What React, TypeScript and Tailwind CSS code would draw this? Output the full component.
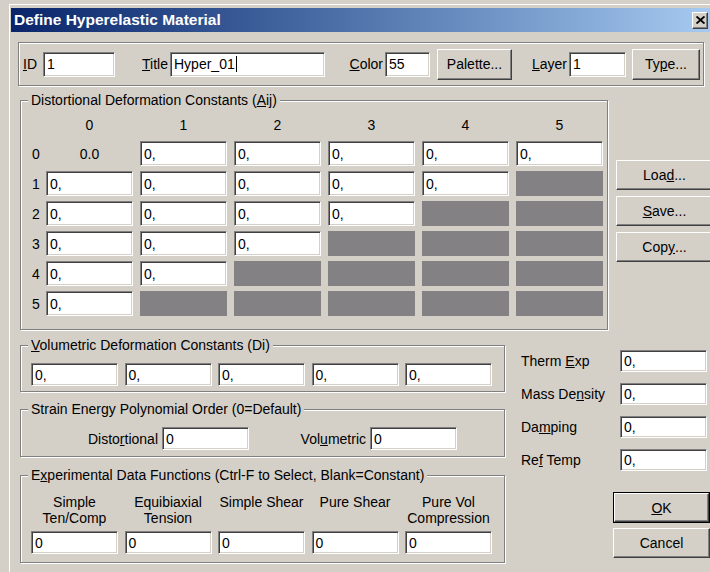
import React from "react";

// classic 3D edges
const sunken =
  "border border-t-[#808080] border-l-[#808080] border-b-white border-r-white shadow-[inset_1px_1px_0_#404040,inset_-1px_-1px_0_#d4d0c8]";
const raised =
  "border border-t-white border-l-white border-b-[#404040] border-r-[#404040] shadow-[inset_-1px_-1px_0_#808080]";
const etched = "border border-[#808080] shadow-[1px_1px_0_#fff,inset_1px_1px_0_#fff]";

function Field({
  value,
  className = "w-[87px] h-[25px]",
  caret = false,
}: {
  value: string;
  className?: string;
  caret?: boolean;
}) {
  return (
    <div
      className={`${sunken} ${className} shrink-0 bg-white flex items-center pl-[3px] overflow-hidden whitespace-nowrap`}
    >
      {value}
      {caret && <span className="ml-px inline-block w-px h-[16px] bg-black" />}
    </div>
  );
}

function Button({ children, className = "" }: { children: React.ReactNode; className?: string }) {
  return (
    <button className={`${raised} bg-[#d4d0c8] shrink-0 flex items-center justify-center ${className}`}>
      {children}
    </button>
  );
}

function Group({
  title,
  className = "",
  children,
}: {
  title: React.ReactNode;
  className?: string;
  children: React.ReactNode;
}) {
  return (
    <fieldset className={`${etched} ${className}`}>
      <legend className="ml-[7px] px-[3px] bg-[#d4d0c8] leading-[17px]">{title}</legend>
      {children}
    </fieldset>
  );
}

const cols = [0, 1, 2, 3, 4, 5];

function Cell({ r, c }: { r: number; c: number }) {
  if (r === 0 && c === 0) return <div className="w-[87px] h-[25px] shrink-0 flex items-center justify-center">0.0</div>;
  if (c >= 1 && r + c > 5) return <div className="w-[87px] h-[25px] shrink-0 bg-[#838184]" />;
  return <Field value="0," />;
}

export default function App() {
  return (
    <div className="w-[710px] h-[572px] overflow-hidden bg-[#d4d0c8] pl-[9px] pt-[4px] text-[14px] leading-[16px] text-black font-['Liberation_Sans',Arial,sans-serif]">
      <div className="border-l border-t border-white pl-px pt-[3px] h-full">
        {/* title bar */}
        <div className="h-[24px] w-[699px] flex items-center bg-linear-to-r from-[#0a246a] to-[#a6caf0] pl-[3px] pr-[2px]">
          <span className="font-bold text-white text-[15.5px]">Define Hyperelastic Material</span>
          <button className={`${raised} ml-auto w-[16px] h-[17px] bg-[#d4d0c8] flex items-center justify-center`}>
            <svg width="9" height="8" viewBox="0 0 9 8">
              <path d="M0.5 0.5 L8.5 7.5 M8.5 0.5 L0.5 7.5" stroke="#000" strokeWidth="1.9" />
            </svg>
          </button>
        </div>

        {/* id / title / color / layer */}
        <div className={`${etched} ml-[7px] mt-[10px] w-[686px] h-[44px] flex items-center`}>
          <span className="w-[24px] pl-[4px] shrink-0">
            <u>I</u>D
          </span>
          <Field value="1" className="w-[72px] h-[25px]" />
          <span className="w-[55px] text-right pr-[2px] shrink-0">
            <u>T</u>itle
          </span>
          <Field value="Hyper_01" caret className="w-[155px] h-[25px]" />
          <span className="w-[60px] text-right pr-[2px] shrink-0">
            <u>C</u>olor
          </span>
          <Field value="55" className="w-[45px] h-[25px]" />
          <Button className="ml-[7px] w-[75px] h-[31px]">Palette...</Button>
          <span className="w-[57px] text-right pr-[2px] shrink-0">
            <u>L</u>ayer
          </span>
          <Field value="1" className="w-[57px] h-[25px]" />
          <Button className="ml-[6px] w-[68px] h-[31px]">
            Ty<u>p</u>e...
          </Button>
        </div>

        {/* Aij matrix + file buttons */}
        <div className="flex mt-[6px]">
          <Group
            className="ml-[9px] w-[588px] shrink-0"
            title={
              <>
                Distortional Deformation Constants (<u>A</u>ij)
              </>
            }
          >
            <div className="pt-[8px] pb-[13px] pl-[5px]">
              <div className="flex h-[16px] items-center mb-[8px]">
                <span className="w-[20px] shrink-0" />
                <div className="flex gap-[7px]">
                  {cols.map((c) => (
                    <span key={c} className="w-[87px] text-center">
                      {c}
                    </span>
                  ))}
                </div>
              </div>
              <div className="flex flex-col gap-[5px]">
                {cols.map((r) => (
                  <div key={r} className="flex items-center h-[25px]">
                    <span className="w-[20px] text-center shrink-0">{r}</span>
                    <div className="flex gap-[7px]">
                      {cols.map((c) => (
                        <Cell key={c} r={r} c={c} />
                      ))}
                    </div>
                  </div>
                ))}
              </div>
            </div>
          </Group>
          <div className="ml-[8px] pt-[68px] flex flex-col gap-[6px]">
            <Button className="w-[97px] h-[30px]">
              Loa<u>d</u>...
            </Button>
            <Button className="w-[97px] h-[30px]">
              <u>S</u>ave...
            </Button>
            <Button className="w-[97px] h-[30px]">
              Cop<u>y</u>...
            </Button>
          </div>
        </div>

        <div className="flex mt-[7px]">
          <div className="ml-[9px] w-[485px] shrink-0">
            <Group
              title={
                <>
                  <u>V</u>olumetric Deformation Constants (Di)
                </>
              }
            >
              <div className="pt-[9px] pb-[5px] pl-[10px] flex gap-[6.5px]">
                {[0, 1, 2, 3, 4].map((i) => (
                  <Field key={i} value="0," className="w-[87px] h-[23px]" />
                ))}
              </div>
            </Group>

            <Group className="mt-[9px]" title="Strain Energy Polynomial Order (0=Default)">
              <div className="pt-[9px] pb-[6px] flex items-center">
                <span className="ml-[62px] w-[75px] text-right shrink-0">
                  Disto<u>r</u>tional
                </span>
                <Field value="0" className="ml-[4px] w-[87px] h-[23px]" />
                <span className="w-[117px] text-right shrink-0">
                  Vol<u>u</u>metric
                </span>
                <Field value="0" className="ml-[4px] w-[87px] h-[23px]" />
              </div>
            </Group>

            <Group
              className="mt-[10px]"
              title={
                <>
                  E<u>x</u>perimental Data Functions (Ctrl-F to Select, Blank=Constant)
                </>
              }
            >
              <div className="pt-[10px] pb-[8px] pl-[10px]">
                <div className="flex gap-[6.5px] h-[32px]">
                  {[
                    ["Simple", "Ten/Comp"],
                    ["Equibiaxial", "Tension"],
                    ["Simple Shear"],
                    ["Pure Shear"],
                    ["Pure Vol", "Compression"],
                  ].map((lines, i) => (
                    <div key={i} className="w-[87px] shrink-0 text-center whitespace-nowrap">
                      {lines.map((l) => (
                        <div key={l}>{l}</div>
                      ))}
                    </div>
                  ))}
                </div>
                <div className="flex gap-[6.5px] mt-[5px]">
                  {[0, 1, 2, 3, 4].map((i) => (
                    <Field key={i} value="0" className="w-[87px] h-[23px]" />
                  ))}
                </div>
              </div>
            </Group>
          </div>

          {/* material properties + dialog buttons */}
          <div className="ml-[8px] pt-[13px] flex flex-col">
            <div className="flex flex-col gap-[11px]">
              {[
                [<>Therm <u>E</u>xp</>, "therm"],
                [<>Mass De<u>n</u>sity</>, "mass"],
                [<>Da<u>m</u>ping</>, "damp"],
                [<>Re<u>f</u> Temp</>, "ref"],
              ].map(([label, key]) => (
                <div key={key as string} className="flex items-center h-[22px]">
                  <span className="w-[107px] pl-[8px] shrink-0">{label}</span>
                  <Field value="0," className="w-[87px] h-[22px]" />
                </div>
              ))}
            </div>
            <div className="ml-[100px] mt-[21px] w-[97px] h-[31px] border border-black">
              <Button className="w-full h-full">
                <u>O</u>K
              </Button>
            </div>
            <Button className="ml-[100px] mt-[5px] w-[97px] h-[30px]">Cancel</Button>
          </div>
        </div>
      </div>
    </div>
  );
}
